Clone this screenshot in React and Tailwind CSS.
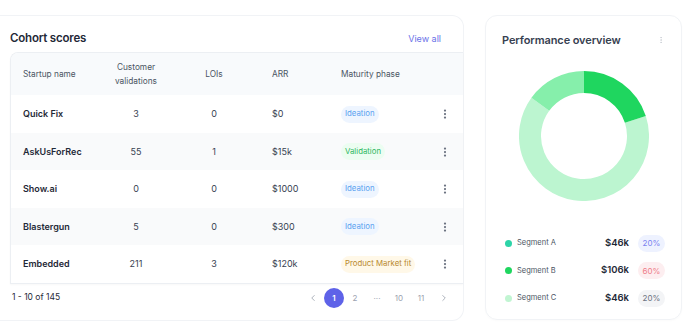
import { MoreVertical, ChevronLeft, ChevronRight } from "lucide-react";

const ROWS = [
  { name: "Quick Fix", validations: "3", lois: "0", arr: "$0", phase: "Ideation" },
  { name: "AskUsForRec", validations: "55", lois: "1", arr: "$15k", phase: "Validation" },
  { name: "Show.ai", validations: "0", lois: "0", arr: "$1000", phase: "Ideation" },
  { name: "Blastergun", validations: "5", lois: "0", arr: "$300", phase: "Ideation" },
  { name: "Embedded", validations: "211", lois: "3", arr: "$120k", phase: "Product Market fit" },
];

const PHASE_CLASS = {
  Ideation: "bg-[#eef5ff] text-[#5aa2f0]",
  Validation: "bg-[#ecfdf1] text-[#2fb862]",
  "Product Market fit": "bg-[#fff8e8] text-[#b8892f]",
};

const GRID = "grid grid-cols-[90px_70px_86px_84px_90px_1fr] items-center";

const SEGMENTS = [
  { label: "Segment A", value: "$46k", pct: "20%", dot: "bg-[#2dd4a8]", badge: "bg-[#eef2ff] text-[#7b83f0]" },
  { label: "Segment B", value: "$106k", pct: "60%", dot: "bg-[#1fd65f]", badge: "bg-[#fdeef0] text-[#ee7d8a]" },
  { label: "Segment C", value: "$46k", pct: "20%", dot: "bg-[#c1f5d2]", badge: "bg-[#f3f4f6] text-[#6b7280]" },
];

function arc(cx, cy, r, start, end) {
  const rad = (a) => ((a - 90) * Math.PI) / 180;
  const x1 = cx + r * Math.cos(rad(start));
  const y1 = cy + r * Math.sin(rad(start));
  const x2 = cx + r * Math.cos(rad(end));
  const y2 = cy + r * Math.sin(rad(end));
  const large = end - start > 180 ? 1 : 0;
  return `M ${x1} ${y1} A ${r} ${r} 0 ${large} 1 ${x2} ${y2}`;
}

function Donut() {
  return (
    <svg width="130" height="130" viewBox="0 0 130 130">
      <path d={arc(65, 65, 54, 72, 306)} fill="none" stroke="#bcf5d0" strokeWidth="22" />
      <path d={arc(65, 65, 54, 306, 360)} fill="none" stroke="#86efab" strokeWidth="22" />
      <path d={arc(65, 65, 54, 0, 72)} fill="none" stroke="#1fd65f" strokeWidth="22" />
    </svg>
  );
}

function CohortScores() {
  return (
    <section className="flex w-[464px] flex-col rounded-r-xl border border-l-0 border-[#f1f3f6] pt-[14px] pb-[8px]">
      <div className="flex items-center justify-between pl-[10px] pr-[22px]">
        <h2 className="text-[11.5px] font-semibold tracking-[-0.2px] text-[#1f2937]">Cohort scores</h2>
        <span className="text-[9px] text-[#6a72e8]">View all</span>
      </div>
      <div className="ml-[10px] mt-[5px] overflow-hidden rounded-tl-lg border-l border-t border-b border-[#eceff3] shadow-[0_1px_2px_rgba(0,0,0,0.03)]">
        <div className={`${GRID} h-[42px] bg-[#f8fafc] text-[8.3px] text-[#4b5563]`}>
          <span className="pl-3">Startup name</span>
          <span className="text-center leading-[14px]">
            Customer
            <br />
            validations
          </span>
          <span className="text-center">LOIs</span>
          <span className="pl-[15px]">ARR</span>
          <span>Maturity phase</span>
          <span />
        </div>
        {ROWS.map((row, index) => (
          <div
            key={row.name}
            className={`${GRID} h-[37.5px] text-[9px] text-[#374151] ${index % 2 === 1 ? "bg-[#f9fafb]" : "bg-white"}`}
          >
            <span className="pl-3 font-semibold text-[#1f2937]">{row.name}</span>
            <span className="text-center">{row.validations}</span>
            <span className="text-center">{row.lois}</span>
            <span className="pl-[15px]">{row.arr}</span>
            <span>
              <span className={`inline-flex h-[17px] items-center whitespace-nowrap rounded-full px-[4px] text-[7.8px] ${PHASE_CLASS[row.phase]}`}>
                {row.phase}
              </span>
            </span>
            <span className="pl-[8px] text-[#6b7280]">
              <MoreVertical size={12} strokeWidth={2.5} />
            </span>
          </div>
        ))}
      </div>
      <div className="flex h-[28px] items-center justify-between pl-[12px] pr-[14px]">
        <span className="text-[8.5px] text-[#1f2937]">1 - 10 of 145</span>
        <div className="flex items-center text-[8px] text-[#9ca3af]">
          <ChevronLeft size={10} className="mr-[6px]" />
          <span className="flex h-[20px] w-[20px] items-center justify-center rounded-full bg-[#5e62e8] font-semibold text-white">1</span>
          <span className="w-[22px] text-center">2</span>
          <span className="w-[22px] text-center">···</span>
          <span className="w-[22px] text-center">10</span>
          <span className="w-[22px] text-center">11</span>
          <ChevronRight size={10} className="ml-[7px]" />
        </div>
      </div>
    </section>
  );
}

function PerformanceOverview() {
  return (
    <section className="flex h-[305px] w-[197px] flex-col rounded-xl border border-[#f1f3f6] px-[16px] pt-[16px] shadow-[0_1px_2px_rgba(0,0,0,0.02)]">
      <div className="flex items-center justify-between">
        <h2 className="text-[11px] font-semibold tracking-[-0.1px] text-[#374151]">Performance overview</h2>
        <MoreVertical size={8} className="text-[#c4c8cf]" />
      </div>
      <div className="mt-[22px] flex justify-center">
        <Donut />
      </div>
      <div className="mt-[34px] flex flex-col gap-[10.5px]">
        {SEGMENTS.map((segment) => (
          <div key={segment.label} className="flex h-[17px] items-center">
            <span className={`ml-[3px] h-[7px] w-[7px] rounded-full ${segment.dot}`} />
            <span className="ml-[5px] text-[7.5px] text-[#4b5563]">{segment.label}</span>
            <span className="ml-auto text-[9.5px] font-semibold text-[#1f2937]">{segment.value}</span>
            <span className={`ml-[9px] flex h-[17px] w-[27px] items-center justify-center rounded-full text-[8px] ${segment.badge}`}>
              {segment.pct}
            </span>
          </div>
        ))}
      </div>
    </section>
  );
}

export default function App() {
  return (
    <div className="flex h-[331px] w-[689px] items-start gap-[21px] bg-white pt-[15px] font-['Inter',sans-serif]">
      <CohortScores />
      <PerformanceOverview />
    </div>
  );
}
